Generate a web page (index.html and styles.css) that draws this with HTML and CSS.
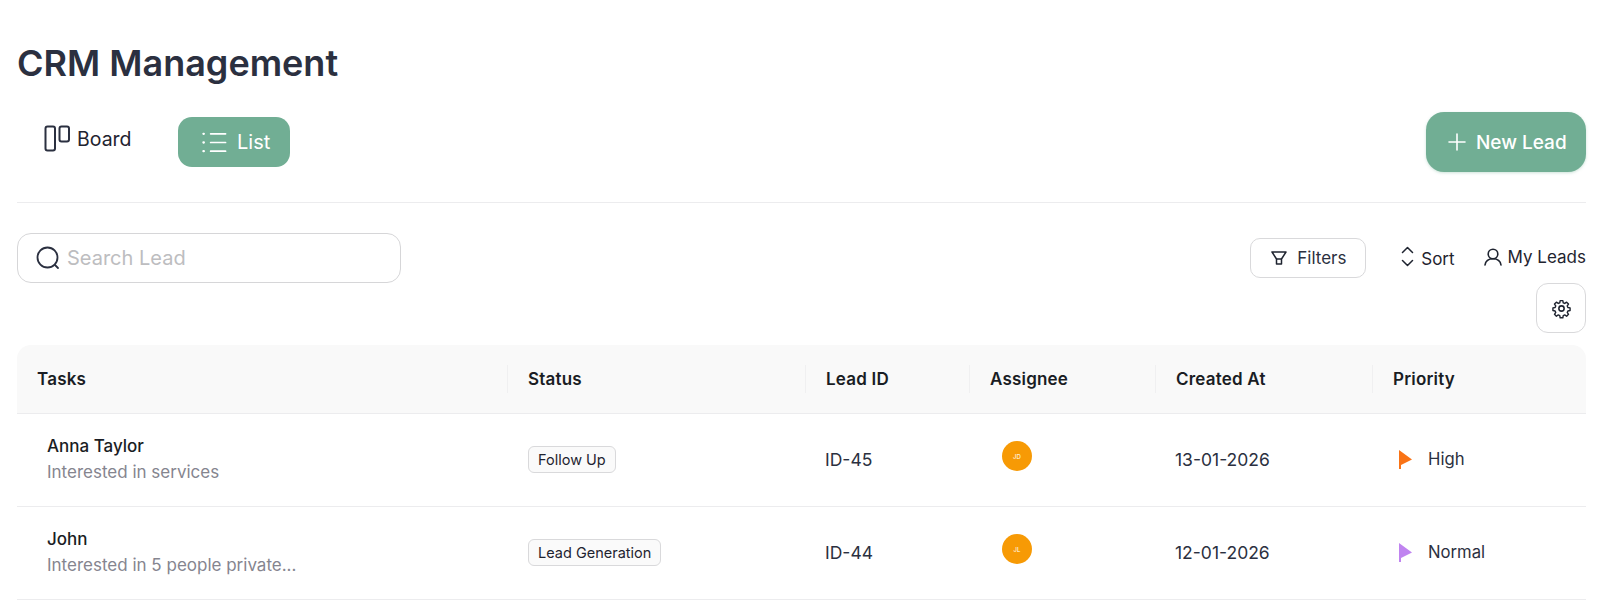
FILE: index.html
```html
<!DOCTYPE html>
<html lang="en">
<head>
<meta charset="utf-8">
<title>CRM Management</title>
<link rel="stylesheet" href="styles.css">
</head>
<body>
<main class="page">
  <h1 class="title">CRM Management</h1>
  <div class="viewbar">
    <div class="tabs">
      <button class="tab tab-board">
        <svg class="icon-board" viewBox="0 0 26 27" fill="none" stroke="#2b3040" stroke-width="2"><rect x="1.5" y="1.5" width="9.5" height="24" rx="2"/><rect x="15.5" y="1.5" width="9.5" height="15" rx="2"/></svg>
        <span>Board</span>
      </button>
      <button class="tab tab-list">
        <svg class="icon-list" viewBox="0 0 26 26" fill="none" stroke="#fff" stroke-width="1.8" stroke-linecap="round"><path d="M9 4h15.500M9 13h15.500M9 22h15.500"/><path d="M1.500 4h.4M1.500 13h.4M1.500 22h.4" stroke-width="2.4"/></svg>
        <span>List</span>
      </button>
    </div>
    <button class="new-lead">
      <svg class="icon-plus" viewBox="0 0 18 18" fill="none" stroke="#fff" stroke-width="1.6" stroke-linecap="round"><path d="M9 1v16M1 9h16"/></svg>
      <span>New Lead</span>
    </button>
  </div>
  <div class="toolbar">
    <label class="search">
      <svg class="icon-search" viewBox="0 0 24 24" fill="none" stroke="#2b3040" stroke-width="1.8" stroke-linecap="round"><circle cx="11.500" cy="11.500" r="10"/><path d="M19 19l3 3"/></svg>
      <span class="placeholder">Search Lead</span>
    </label>
    <div class="actions">
      <div class="actions-row">
        <button class="filters">
          <svg class="icon-filter" viewBox="0 0 16 14" fill="none" stroke="#1f2430" stroke-width="1.500" stroke-linejoin="round"><path d="M1 1h14L10.500 8v5h-5V8z"/><path d="M5.500 8h5"/></svg>
          <span>Filters</span>
        </button>
        <span class="sort">
          <svg class="icon-sort" viewBox="0 0 13 21" fill="none" stroke="#1f2430" stroke-width="1.500" stroke-linecap="round" stroke-linejoin="round"><path d="M1.500 6.500l5-5 5 5M1.500 14.500l5 5 5-5"/></svg>
          <span>Sort</span>
        </span>
        <span class="mine">
          <svg class="icon-user" viewBox="0 0 18 18" fill="none" stroke="#1f2430" stroke-width="1.600" stroke-linecap="round"><circle cx="9" cy="6" r="4.800"/><path d="M1 17c.6-3.800 3-6.200 8-6.200s7.400 2.400 8 6.200"/></svg>
          <span>My Leads</span>
        </span>
      </div>
      <button class="settings">
        <svg class="icon-gear" viewBox="0 0 24 24" fill="none" stroke="#1f2430" stroke-width="1.800" stroke-linejoin="round"><circle cx="12" cy="12" r="3"/><path d="M10.300 2h3.400l.5 2.800 1.900.8 2.400-1.600 2.400 2.400-1.600 2.400.8 1.900 2.800.5v3.400l-2.800.5-.8 1.900 1.600 2.400-2.400 2.400-2.400-1.600-1.900.8-.5 2.800h-3.400l-.5-2.800-1.900-.8-2.400 1.600-2.400-2.400 1.600-2.400-.8-1.900-2.800-.5v-3.400l2.800-.5.8-1.900-1.600-2.400 2.400-2.400 2.400 1.600 1.900-.8z" transform="translate(1.200 1.200) scale(.9)"/></svg>
      </button>
    </div>
  </div>
  <table class="leads">
    <colgroup>
      <col class="c-task"><col class="c-status"><col class="c-id"><col class="c-assignee"><col class="c-created"><col class="c-priority">
    </colgroup>
    <thead>
      <tr>
        <th><span class="th-in">Tasks</span></th>
        <th><span class="th-in sep">Status</span></th>
        <th><span class="th-in sep">Lead ID</span></th>
        <th><span class="th-in sep">Assignee</span></th>
        <th><span class="th-in sep">Created At</span></th>
        <th><span class="th-in sep">Priority</span></th>
      </tr>
    </thead>
    <tbody>
      <tr>
        <td class="task"><div class="name">Anna Taylor</div><div class="desc">Interested in services</div></td>
        <td><span class="tag">Follow Up</span></td>
        <td>ID-45</td>
        <td><span class="avatar">JD</span></td>
        <td>13-01-2026</td>
        <td><span class="prio"><svg class="flag" viewBox="0 0 13 19"><path fill="#f97316" d="M0 0l13 9.500L2 15v4H0z"/></svg>High</span></td>
      </tr>
      <tr>
        <td class="task"><div class="name">John</div><div class="desc">Interested in 5 people private...</div></td>
        <td><span class="tag">Lead Generation</span></td>
        <td>ID-44</td>
        <td><span class="avatar">JL</span></td>
        <td>12-01-2026</td>
        <td><span class="prio"><svg class="flag" viewBox="0 0 13 19"><path fill="#c084f0" d="M0 0l13 9.500L2 15v4H0z"/></svg>Normal</span></td>
      </tr>
    </tbody>
  </table>
</main>
</body>
</html>
```
FILE: styles.css
```css
* { box-sizing: border-box; }
html, body { margin: 0; padding: 0; background: #fff; }
body { font-family: "Inter", "Noto Sans", sans-serif; color: #1f2430; overflow: hidden; }
button { font: inherit; color: inherit; background: none; border: 0; padding: 0; }
svg { display: block; flex: none; }

.page { padding: 38px 28px 0 17px; }
.title { margin: 0; font-size: 36px; line-height: 50px; font-weight: 600; color: #2b3040; }

.viewbar { display: flex; justify-content: space-between; align-items: flex-start; margin-top: 24px; height: 91px; border-bottom: 1px solid #ececee; }
.tabs { display: flex; align-items: flex-start; gap: 30px; padding-top: 5px; padding-left: 27px; }
.tab { display: flex; align-items: center; font-size: 20px; }
.tab-board { gap: 7px; width: 104px; height: 44px; font-size: 19.5px; color: #1f2430; }
.icon-board { width: 26px; height: 27px; margin-top: -2px; }
.tab-list { gap: 10px; width: 112px; height: 50px; padding-left: 24px; background: #71ae94; border-radius: 14px; color: #fff; }
.icon-list { width: 25px; height: 25px; }
.new-lead { display: flex; align-items: center; gap: 10px; width: 160px; height: 60px; padding-left: 22px; background: #71ae94; border-radius: 18px; color: #fff; font-size: 19px; font-weight: 500; box-shadow: 0 1px 3px rgba(113, 174, 148, .35); }
.icon-plus { width: 18px; height: 18px; }

.toolbar { display: flex; justify-content: space-between; align-items: flex-start; margin-top: 30px; }
.search { display: flex; align-items: center; gap: 7px; width: 384px; height: 50px; padding-left: 18px; border: 1px solid #d6d6d8; border-radius: 14px; }
.icon-search { width: 24px; height: 24px; }
.placeholder { font-size: 20px; color: #bdbdc0; }
.actions { display: flex; flex-direction: column; align-items: flex-end; }
.actions-row { display: flex; align-items: flex-start; height: 50px; }
.filters { display: flex; align-items: center; gap: 10px; width: 116px; height: 40px; margin-top: 5px; margin-right: 35px; padding-left: 20px; border: 1px solid #d9d9db; border-radius: 10px; font-size: 17px; color: #2b3040; }
.icon-filter { width: 16px; height: 14px; }
.sort { display: flex; align-items: center; gap: 7px; margin-top: 16px; margin-right: 29px; font-size: 17px; }
.icon-sort { width: 13px; height: 21px; margin-top: -5px; }
.mine { display: flex; align-items: center; gap: 6px; margin-top: 14px; font-size: 17px; }
.icon-user { width: 18px; height: 18px; }
.settings { display: flex; align-items: center; justify-content: center; width: 50px; height: 50px; border: 1px solid #d9d9db; border-radius: 12px; }
.icon-gear { width: 21px; height: 21px; }

.leads { width: 100%; table-layout: fixed; border-collapse: separate; border-spacing: 0; margin-top: 12px; font-size: 17.5px; }
.c-task { width: 490px; }
.c-status { width: 298px; }
.c-id { width: 164px; }
.c-assignee { width: 186px; }
.c-created { width: 217px; }
.leads th { height: 69px; padding: 0; background: #f9f9f9; border-bottom: 1px solid #ececee; text-align: left; font-size: 17px; font-weight: 600; letter-spacing: .2px; color: #1a1d24; }
.leads th:first-child { border-top-left-radius: 14px; }
.leads th:last-child { border-top-right-radius: 14px; }
.th-in { display: flex; align-items: center; height: 28px; padding-left: 20px; }
.th-in.sep { border-left: 1px solid #f0f0f1; }
.leads td { height: 93px; padding: 0 0 2px 20px; border-bottom: 1px solid #ececee; color: #2b3040; }
.leads td.task { padding: 0 0 0 30px; }
.name { font-size: 17px; font-weight: 500; line-height: 25px; color: #1a1d24; }
.desc { font-size: 17px; line-height: 27px; color: #85858f; }
.tag { display: inline-block; height: 27px; margin-left: 1px; padding: 0 9px; border: 1px solid #d9d9db; border-radius: 6px; background: #fafafa; font-size: 14.5px; line-height: 25px; color: #1f2430; }
.avatar { display: flex; align-items: center; justify-content: center; width: 30px; height: 30px; margin: -6px 0 0 13px; border-radius: 50%; background: #f79a05; font-size: 6px; color: #fff; }
.prio { display: flex; align-items: center; gap: 16px; margin-left: 7px; font-size: 16.7px; }
.flag { width: 13px; height: 19px; }
```
